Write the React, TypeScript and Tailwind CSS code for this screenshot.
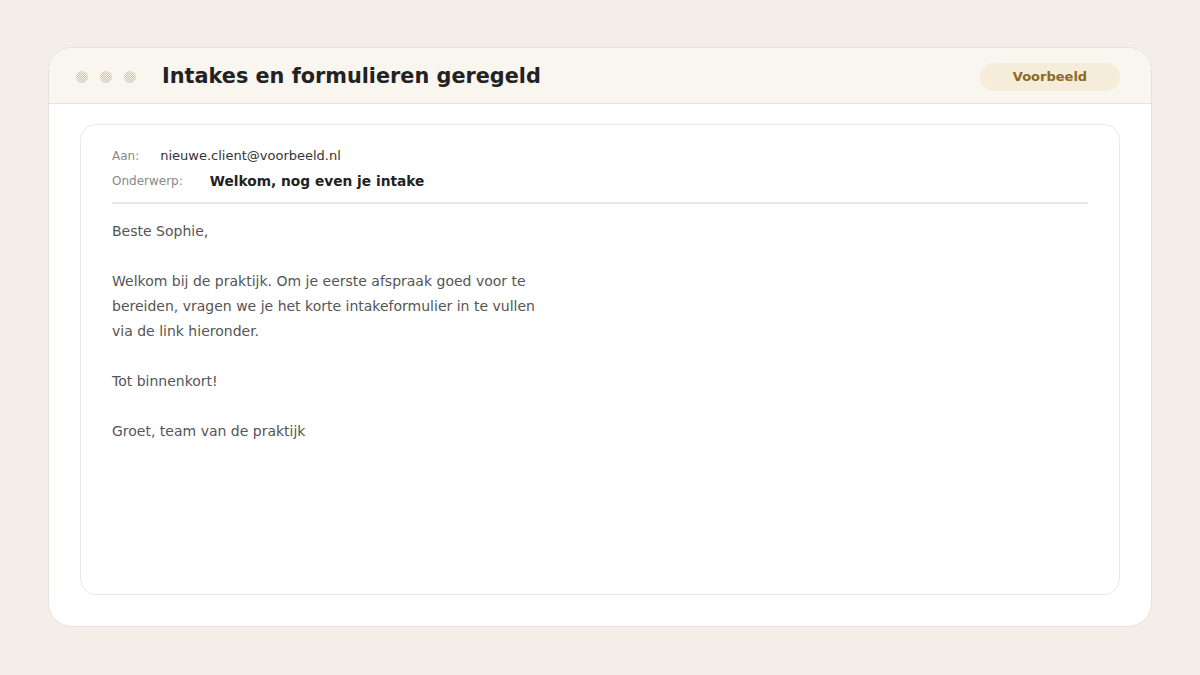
import React from "react";

function Dot() {
  return (
    <svg width="12" height="12" viewBox="0 0 12 12" className="block">
      <defs>
        <pattern id="chk" width="2" height="2" patternUnits="userSpaceOnUse">
          <rect width="2" height="2" fill="#f4f0e8" />
          <rect width="1" height="1" fill="#cdc4b3" />
          <rect x="1" y="1" width="1" height="1" fill="#cdc4b3" />
        </pattern>
      </defs>
      <circle cx="6" cy="6" r="6" fill="url(#chk)" />
    </svg>
  );
}

export default function App() {
  return (
    <div
      className="min-h-[675px] w-full bg-[#f3eee7] px-12 pt-[47px]"
      style={{ fontFamily: '"DejaVu Sans", sans-serif' }}
    >
      <div className="h-[580px] rounded-[24px] border border-[#e7e2d9] bg-white overflow-hidden flex flex-col">
        <div className="h-[56px] shrink-0 bg-[#f9f6ef] border-b border-[#e7e2d9] flex items-center pt-[2px] pl-[27px] pr-[31px]">
          <div className="flex items-center gap-3">
            <Dot />
            <Dot />
            <Dot />
          </div>
          <div className="ml-[26px] text-[20.8px] font-bold text-[#222222] leading-none">
            Intakes en formulieren geregeld
          </div>
          <div className="ml-auto w-[140px] h-[28px] rounded-full bg-[#f5ecd9] flex items-center justify-center text-[13px] font-bold text-[#8a6a1e]">
            Voorbeeld
          </div>
        </div>
        <div className="flex-1 px-[31px] pt-5 pb-[31px] flex">
          <div className="flex-1 rounded-[16px] border border-[#e8e8e6] px-[31px] pt-[22px]">
            <div className="flex items-center leading-[18px]">
              <span className="text-[12px] text-[#888888] mr-[21px]">Aan:</span>
              <span className="text-[13px] text-[#333333]">nieuwe.client@voorbeeld.nl</span>
            </div>
            <div className="flex items-center leading-[18px] mt-[7px]">
              <span className="text-[12px] text-[#888888] mr-[27px]">Onderwerp:</span>
              <span className="text-[13.75px] font-bold text-[#222222]">Welkom, nog even je intake</span>
            </div>
            <div className="mt-[12px] h-[2px] bg-[#ece9e2]" />
            <div className="mt-[15px] text-[14px] leading-[25px] text-[#555555] max-w-[440px]">
              <p>Beste Sophie,</p>
              <p className="mt-[25px]">
                Welkom bij de praktijk. Om je eerste afspraak goed voor te bereiden, vragen we je het korte intakeformulier in te vullen via de link hieronder.
              </p>
              <p className="mt-[25px]">Tot binnenkort!</p>
              <p className="mt-[25px]">Groet, team van de praktijk</p>
            </div>
          </div>
        </div>
      </div>
    </div>
  );
}
